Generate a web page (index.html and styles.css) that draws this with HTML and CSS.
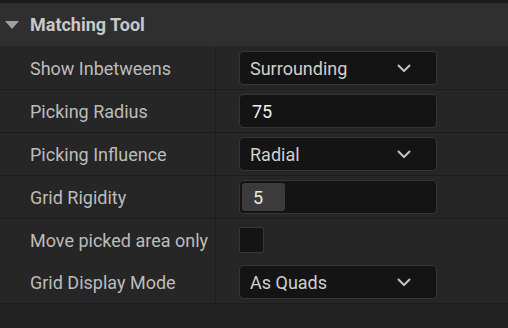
FILE: index.html
```html
<!DOCTYPE html>
<html lang="en">
  <head>
    <meta charset="UTF-8" />
    <title>Matching Tool</title>
    <link rel="stylesheet" href="styles.css">
  </head>
  <body>
    <div class="panel">
      <div class="header">
        <span class="arrow"></span>
        <span class="title">Matching Tool</span>
      </div>

      <div class="row">
        <div class="label">Show Inbetweens</div>
        <div class="value">
          <div class="box combo">
            <span>Surrounding</span>
            <svg class="chevron" width="14" height="8" viewBox="0 0 14 8"><path d="M1 1 L7 7 L13 1" /></svg>
          </div>
        </div>
      </div>

      <div class="row">
        <div class="label">Picking Radius</div>
        <div class="value">
          <div class="box text bright">75</div>
        </div>
      </div>

      <div class="row">
        <div class="label">Picking Influence</div>
        <div class="value">
          <div class="box combo">
            <span>Radial</span>
            <svg class="chevron" width="14" height="8" viewBox="0 0 14 8"><path d="M1 1 L7 7 L13 1" /></svg>
          </div>
        </div>
      </div>

      <div class="row">
        <div class="label">Grid Rigidity</div>
        <div class="value">
          <div class="box slider">
            <div class="fill">5</div>
          </div>
        </div>
      </div>

      <div class="row no-line">
        <div class="label">Move picked area only</div>
        <div class="value">
          <div class="check"></div>
        </div>
      </div>

      <div class="row">
        <div class="label">Grid Display Mode</div>
        <div class="value">
          <div class="box combo">
            <span>As Quads</span>
            <svg class="chevron" width="14" height="8" viewBox="0 0 14 8"><path d="M1 1 L7 7 L13 1" /></svg>
          </div>
        </div>
      </div>
    </div>
  </body>
</html>
```

FILE: styles.css
```css
body {
  margin: 0;
  background-color: #212121;
  font-family: Roboto, "Liberation Sans", sans-serif;
  color: #bdbdbd;
  overflow: hidden;
}

.panel {
  border-top: 3px solid #1a1a1a;
}

.header {
  height: 43px;
  background-color: #2f2f2f;
  display: flex;
  align-items: center;
  border-bottom: 1px solid #2a2a2a;
}

.arrow {
  width: 0;
  height: 0;
  margin-left: 5px;
  margin-right: 11px;
  border-left: 7px solid transparent;
  border-right: 7px solid transparent;
  border-top: 8px solid #a0a0a0;
}

.title {
  font-size: 18px;
  font-weight: bold;
  color: #c8c8c8;
}

.row {
  display: grid;
  grid-template-columns: 216px 1fr;
  height: 42px;
  background-color: #262626;
  border-bottom: 1px solid #1d1d1d;
}

.row.no-line {
  border-bottom: none;
}

.label {
  display: flex;
  align-items: center;
  padding-left: 30px;
  font-size: 18px;
  color: #bcbcbc;
  border-right: 1px solid #1d1d1d;
}

.value {
  display: flex;
  align-items: center;
  padding-left: 23px;
}

.box {
  width: 198px;
  height: 34px;
  box-sizing: border-box;
  background-color: #141414;
  border: 1px solid #363636;
  border-radius: 4px;
  font-size: 18px;
  color: #cfcfcf;
  display: flex;
  align-items: center;
}

.combo {
  justify-content: space-between;
  padding: 0 25px 0 10px;
}

.chevron path {
  fill: none;
  stroke: #c4c4c4;
  stroke-width: 2;
}

.text {
  padding-left: 12px;
}

.bright {
  color: #f0f0f0;
}

.slider {
  padding: 2px;
}

.fill {
  width: 43px;
  height: 100%;
  background-color: #3b3b3b;
  border-radius: 3px;
  padding-left: 11px;
  box-sizing: border-box;
  display: flex;
  align-items: center;
  color: #e8e8e8;
}

.check {
  width: 25px;
  height: 26px;
  box-sizing: border-box;
  background-color: #141414;
  border: 1px solid #363636;
  border-radius: 2px;
}
```
